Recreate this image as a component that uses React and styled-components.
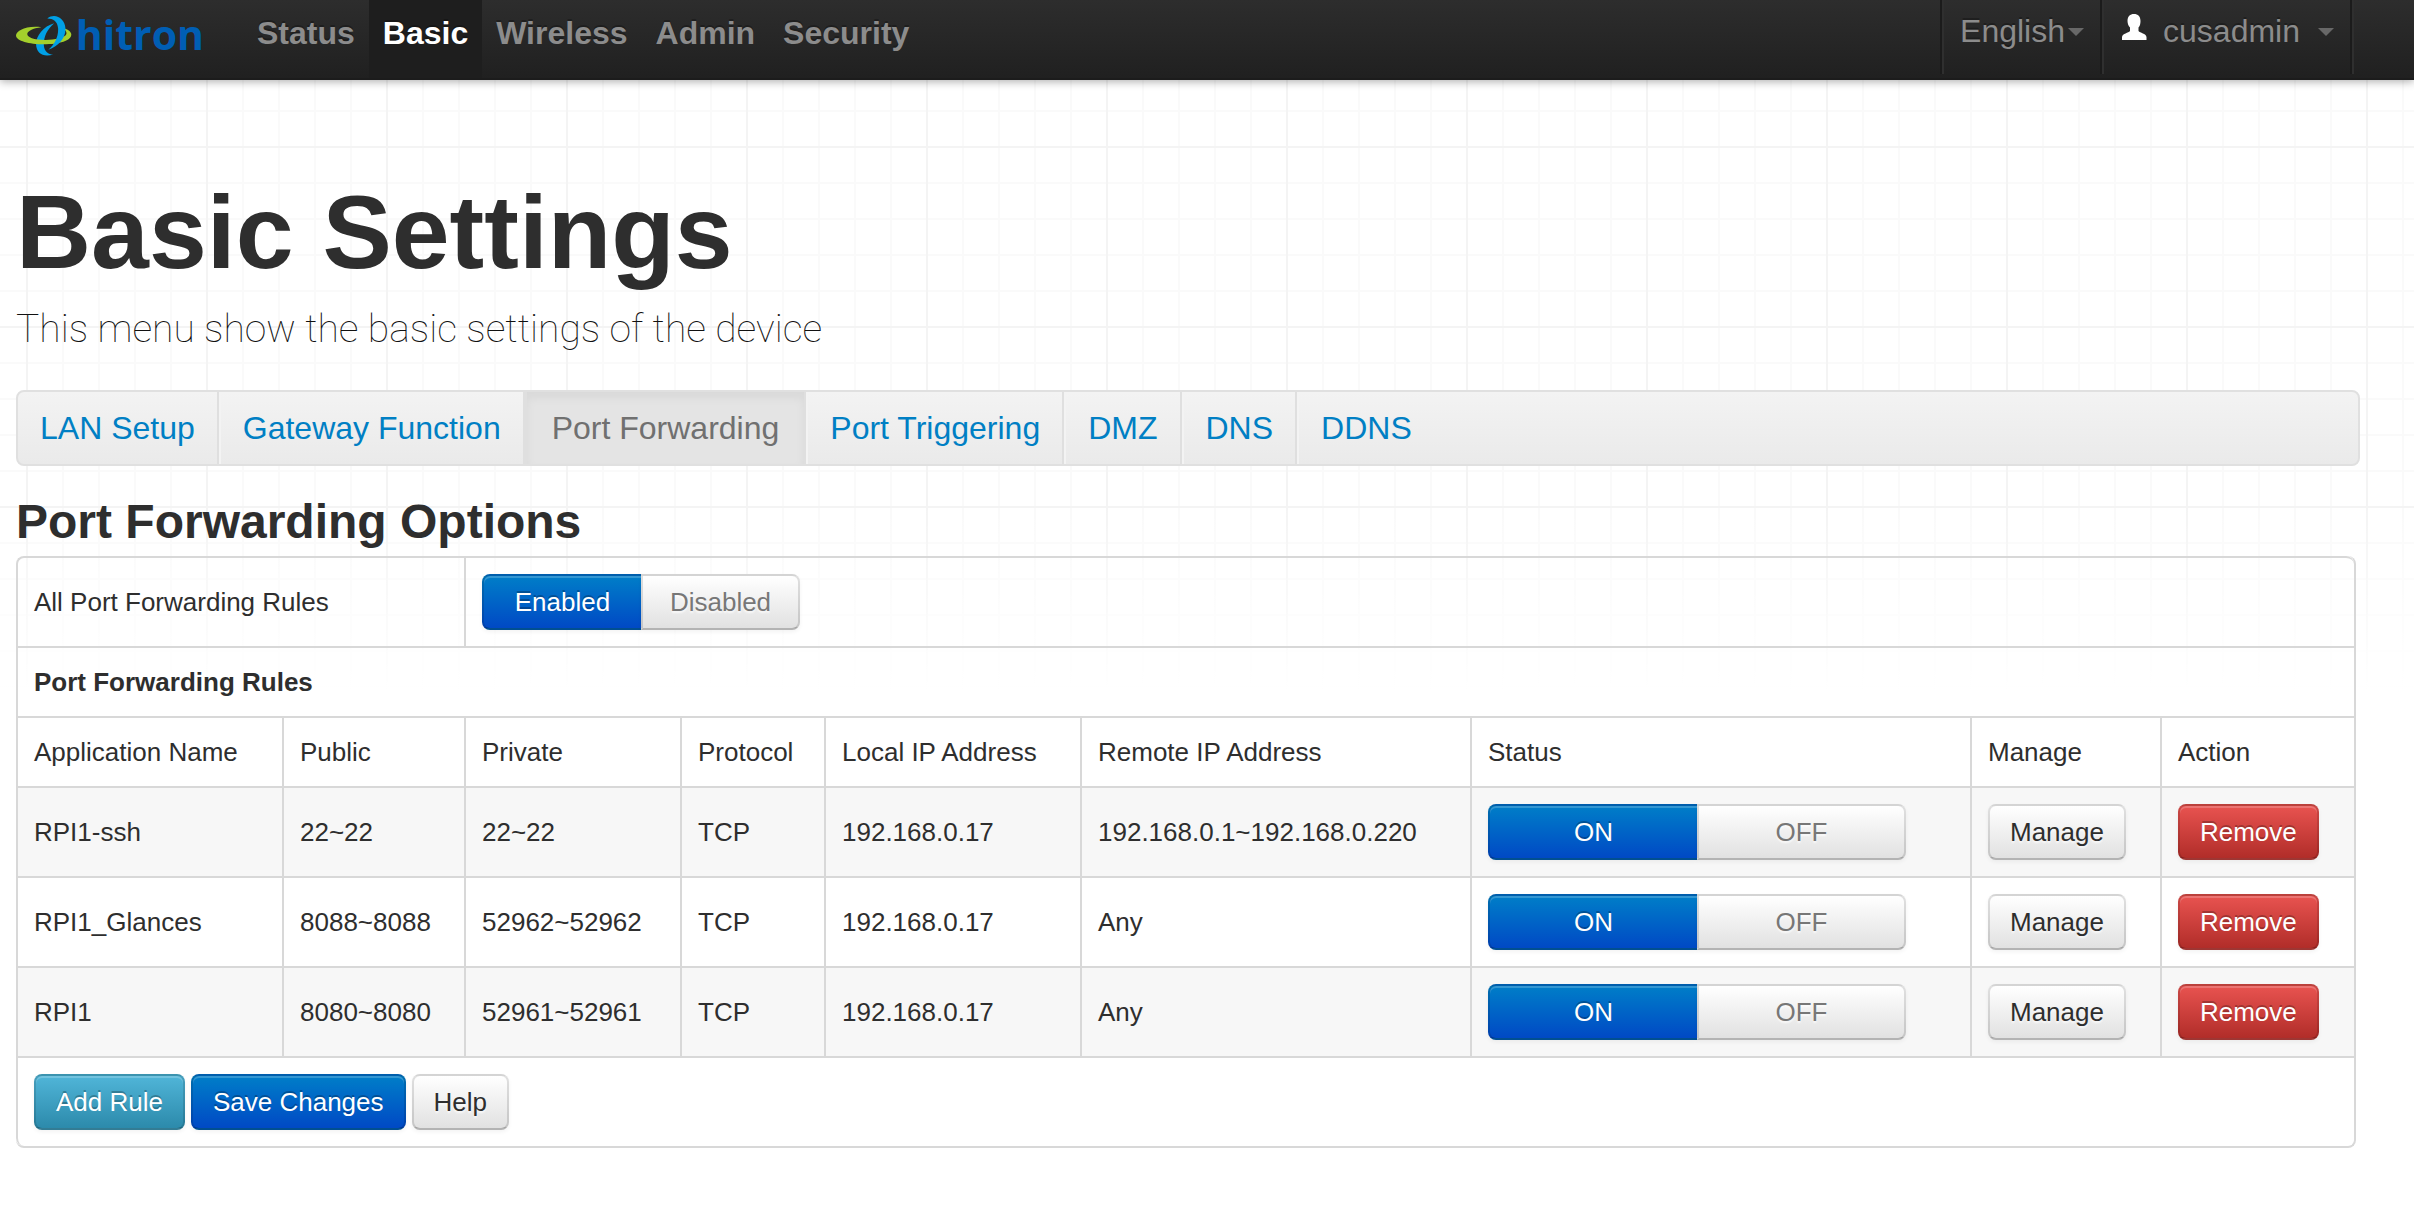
import React, { useState } from "react";
import styled, { createGlobalStyle, css } from "styled-components";

const GlobalStyle = createGlobalStyle`
  * { box-sizing: border-box; }
  body {
    margin: 0;
    min-height: 100vh;
    color: #2e2e2e;
    font: 26px/36px "Helvetica Neue", "Liberation Sans", Arial, sans-serif;
    background-color: #fff;
    background-image:
      linear-gradient(to bottom, rgba(255, 255, 255, 0) 500px, #fff 690px),
      linear-gradient(to right, #f4f4f4 2px, transparent 2px),
      linear-gradient(to bottom, #f4f4f4 2px, transparent 2px),
      linear-gradient(to right, #fafafa 2px, transparent 2px),
      linear-gradient(to bottom, #fafafa 2px, transparent 2px);
    background-size: auto, 180px 180px, 180px 180px, 36px 36px, 36px 36px;
    background-position: 0 0, 26px 146px, 26px 146px, 26px 2px, 26px 2px;
  }
  button, select { font: inherit; cursor: pointer; }
`;

const Navbar = styled.header`
  display: flex;
  align-items: flex-start;
  height: 80px;
  padding: 0 60px 0 16px;
  background: linear-gradient(to bottom, #2d2d2d, #202020);
  border-bottom: 2px solid #1c1c1c;
  box-shadow: 0 2px 8px rgba(0, 0, 0, 0.3);
`;

const Brand = styled.a`
  display: flex;
  align-items: flex-start;
  gap: 4px;
  width: 188px;
  margin-right: 39px;
  padding-top: 16px;
  color: #005eb4;
  text-decoration: none;
`;

const BrandName = styled.span`
  font: 700 41px/36px "Open Sans", sans-serif;
`;

const MainNav = styled.nav`
  display: flex;
  flex: 1;
`;

const NavLink = styled.a`
  padding: 15px 14px 27px;
  font-size: 32px;
  font-weight: bold;
  color: ${(p) => (p.$active ? "#fff" : "#8c8c8c")};
  background: ${(p) => (p.$active ? "#1e1e1e" : "none")};
  text-decoration: none;
  text-shadow: 0 -2px 0 rgba(0, 0, 0, 0.25);
`;

const NavTools = styled.div`
  display: flex;
  height: 74px;
  border-right: 2px solid #2f2f2f;
`;

const toolText = css`
  padding: 0;
  border: 0;
  background: none;
  color: #8c8c8c;
  font-size: 32px;
  line-height: 36px;
  text-shadow: 0 -2px 0 rgba(0, 0, 0, 0.25);
`;

const Tool = styled.div`
  display: flex;
  align-items: flex-start;
  padding: 13px 16px 0;
  border-left: 2px solid #2f2f2f;
  box-shadow: -2px 0 0 #1b1b1b;
  margin-left: 2px;
  &:last-child { border-right: 2px solid #1b1b1b; }
`;

const LanguageSelect = styled.select`
  ${toolText}
  appearance: none;
`;

const UserButton = styled.button`
  ${toolText}
  display: flex;
  gap: 15px;
`;

const CaretIcon = styled.svg`
  width: 16px;
  height: 8px;
  margin-top: 15px;
  margin-left: 3px;
  fill: #686868;
`;

const UserIcon = styled.svg`
  width: 28px;
  height: 28px;
  fill: #fff;
`;

const Page = styled.main`
  padding: 98px 54px 0 16px;
`;

const Title = styled.h1`
  margin: 0;
  font-size: 104px;
  line-height: 108px;
`;

const Lead = styled.p`
  margin: 18px 0 36px;
  color: #111;
  font: 100 39px/50px Roboto, "Liberation Sans", sans-serif;
`;

const Tabs = styled.nav`
  display: flex;
  overflow: hidden;
  border: 2px solid #e0e0e0;
  border-radius: 8px;
  background: linear-gradient(to bottom, #f3f3f3, #eaeaea);
`;

const Tab = styled.a`
  padding: 18px 22px;
  border-left: 2px solid #f3f3f3;
  border-right: 2px solid #dfdfdf;
  font-size: 32px;
  color: #007fc4;
  text-decoration: none;
  &:first-child { border-left: 0; }
  &:last-child { border-right: 0; }
  ${(p) =>
    p.$active &&
    css`
      padding: 18px 25px;
      border-left-color: #dfdfdf;
      color: #707070;
      background: #e4e4e4;
      box-shadow: inset 0 6px 10px rgba(0, 0, 0, 0.05);
    `}
`;

const SectionTitle = styled.h2`
  margin: 26px 0 4px;
  font-size: 48px;
  line-height: 60px;
`;

const TableFrame = styled.div`
  padding-right: 4px;
`;

const Table = styled.table`
  width: 100%;
  table-layout: fixed;
  border-collapse: separate;
  border-spacing: 0;
  border: solid #d8d8d8;
  border-width: 0 2px 2px 0;
  border-radius: 8px;
  th, td {
    padding: 16px;
    border: solid #d8d8d8;
    border-width: 2px 0 0 2px;
    text-align: left;
    vertical-align: middle;
    white-space: nowrap;
  }
  tbody tr:first-child > :first-child { border-top-left-radius: 8px; }
  tbody tr:first-child > :last-child { border-top-right-radius: 8px; }
  tfoot td { border-bottom-left-radius: 8px; }
`;

const HeadCell = styled.th`
  font-weight: ${(p) => (p.$strong ? "bold" : "normal")};
`;

const RuleRow = styled.tr`
  background: ${(p) => (p.$striped ? "#f7f7f7" : "transparent")};
`;

const tones = {
  plain: ["#f2f2f2", "#fff", "#e1e1e1"],
  primary: ["#006bc4", "#007ec8", "#0049c5"],
  info: ["#45a8c8", "#50b5d8", "#2c8aab"],
  danger: ["#d54a45", "#e85350", "#b12d29"],
};

const Button = styled.button`
  padding: 8px 20px;
  border: 2px solid;
  border-color: rgba(0, 0, 0, 0.12) rgba(0, 0, 0, 0.12) rgba(0, 0, 0, 0.26);
  border-radius: 8px;
  color: ${(p) => (p.$tone === "plain" ? "#2e2e2e" : "#fff")};
  background: ${(p) => tones[p.$tone][0]}
    linear-gradient(to bottom, ${(p) => tones[p.$tone][1]}, ${(p) => tones[p.$tone][2]}) repeat-x;
  box-shadow: inset 0 2px 0 rgba(255, 255, 255, 0.2), 0 2px 4px rgba(0, 0, 0, 0.05);
  text-shadow: ${(p) =>
    p.$tone === "plain" ? "0 2px 2px rgba(255, 255, 255, 0.75)" : "0 -2px 0 rgba(0, 0, 0, 0.25)"};
`;

const Segment = styled(Button)`
  width: ${(p) => (p.$wide ? 209 : 159)}px;
  color: ${(p) => (p.$tone === "plain" ? "#777" : "#fff")};
  &:first-child { border-radius: 8px 0 0 8px; border-right-width: 0; }
  &:last-child { border-radius: 0 8px 8px 0; }
`;

const ButtonRow = styled.div`
  display: flex;
  gap: ${(p) => p.$gap || 0}px;
`;

const columns = [
  ["Application Name", 266],
  ["Public", 182],
  ["Private", 216],
  ["Protocol", 144],
  ["Local IP Address", 256],
  ["Remote IP Address", 390],
  ["Status", null],
  ["Manage", 190],
  ["Action", 194],
];

const rules = [
  ["RPI1-ssh", "22~22", "22~22", "TCP", "192.168.0.17", "192.168.0.1~192.168.0.220"],
  ["RPI1_Glances", "8088~8088", "52962~52962", "TCP", "192.168.0.17", "Any"],
  ["RPI1", "8080~8080", "52961~52961", "TCP", "192.168.0.17", "Any"],
];

function Logo() {
  return (
    <svg width="57" height="40" viewBox="16 16 57 40" aria-hidden="true">
      <path fill="#00a0e6" d="M55 23C44 26 36.500 36 36.500 44C36.500 54 44 58 54 55C49 55 45 52 44.500 46C44 38 47 30 55 23Z" />
      <path fill="#a4cf2c" d="M42 27C26 25 16 31 16 35.500C16 41 30 44.500 44 44.500C60 44.500 73 41 72.500 34C72 31 68 28.500 64 28C67 30 68 32 67.500 34C66 38 56 40 46 40C34 40 27.500 37.500 27.500 34C27.500 31 33 28 42 27Z" />
      <path fill="#00a0e6" d="M48 18C56 12 66 18 66.500 28C67 38 60 46 49 50C56 44 59.500 36 59 28C58.500 21 54 18 48 18Z" />
    </svg>
  );
}

function Caret() {
  return (
    <CaretIcon viewBox="0 0 16 8" aria-hidden="true">
      <path d="M0 0H16L8 8Z" />
    </CaretIcon>
  );
}

function Toggle({ label, options, wide }) {
  const [selected, setSelected] = useState(0);
  return (
    <ButtonRow role="group" aria-label={label}>
      {options.map((option, i) => (
        <Segment
          key={option}
          type="button"
          $wide={wide}
          $tone={i === selected ? "primary" : "plain"}
          aria-pressed={i === selected}
          onClick={() => setSelected(i)}
        >
          {option}
        </Segment>
      ))}
    </ButtonRow>
  );
}

export default function App() {
  return (
    <>
      <GlobalStyle />
      <Navbar>
        <Brand href="#">
          <Logo />
          <BrandName>hitron</BrandName>
        </Brand>
        <MainNav>
          {["Status", "Basic", "Wireless", "Admin", "Security"].map((name) => (
            <NavLink key={name} href="#" $active={name === "Basic"}>
              {name}
            </NavLink>
          ))}
        </MainNav>
        <NavTools>
          <Tool>
            <LanguageSelect aria-label="Language">
              <option>English</option>
            </LanguageSelect>
            <Caret />
          </Tool>
          <Tool>
            <UserButton type="button" aria-haspopup="menu">
              <UserIcon viewBox="0 0 28 28" aria-hidden="true">
                <path d="M14 1C18 1 20.500 3.500 20.500 8C20.500 10.500 20 13 18.500 14.500V18C20 20 26 20.500 26.500 24V27H2V24C2.500 20.500 8.500 20 10 18V14.500C8.500 13 7.500 10.500 7.500 8C7.500 3.500 10 1 14 1Z" />
              </UserIcon>
              cusadmin
              <Caret />
            </UserButton>
          </Tool>
        </NavTools>
      </Navbar>
      <Page>
        <Title>Basic Settings</Title>
        <Lead>This menu show the basic settings of the device</Lead>
        <Tabs aria-label="Basic settings">
          {["LAN Setup", "Gateway Function", "Port Forwarding", "Port Triggering", "DMZ", "DNS", "DDNS"].map((name) => (
            <Tab key={name} href="#" $active={name === "Port Forwarding"}>
              {name}
            </Tab>
          ))}
        </Tabs>
        <SectionTitle>Port Forwarding Options</SectionTitle>
        <TableFrame>
          <Table>
            <colgroup>
              {columns.map(([name, width]) => (
                <col key={name} width={width || undefined} />
              ))}
            </colgroup>
            <tbody>
              <tr>
                <td colSpan={2}>All Port Forwarding Rules</td>
                <td colSpan={7}>
                  <Toggle label="All Port Forwarding Rules" options={["Enabled", "Disabled"]} />
                </td>
              </tr>
              <tr>
                <HeadCell $strong colSpan={9}>Port Forwarding Rules</HeadCell>
              </tr>
              <tr>
                {columns.map(([name]) => (
                  <HeadCell key={name} scope="col">{name}</HeadCell>
                ))}
              </tr>
              {rules.map((rule, i) => (
                <RuleRow key={rule[0]} $striped={i % 2 === 0}>
                  {rule.map((value, j) => (
                    <td key={j}>{value}</td>
                  ))}
                  <td>
                    <Toggle wide label={`${rule[0]} status`} options={["ON", "OFF"]} />
                  </td>
                  <td>
                    <ButtonRow>
                      <Button type="button" $tone="plain">Manage</Button>
                    </ButtonRow>
                  </td>
                  <td>
                    <ButtonRow>
                      <Button type="button" $tone="danger">Remove</Button>
                    </ButtonRow>
                  </td>
                </RuleRow>
              ))}
            </tbody>
            <tfoot>
              <tr>
                <td colSpan={9}>
                  <ButtonRow $gap={6}>
                    <Button type="button" $tone="info">Add Rule</Button>
                    <Button type="button" $tone="primary">Save Changes</Button>
                    <Button type="button" $tone="plain">Help</Button>
                  </ButtonRow>
                </td>
              </tr>
            </tfoot>
          </Table>
        </TableFrame>
      </Page>
    </>
  );
}
